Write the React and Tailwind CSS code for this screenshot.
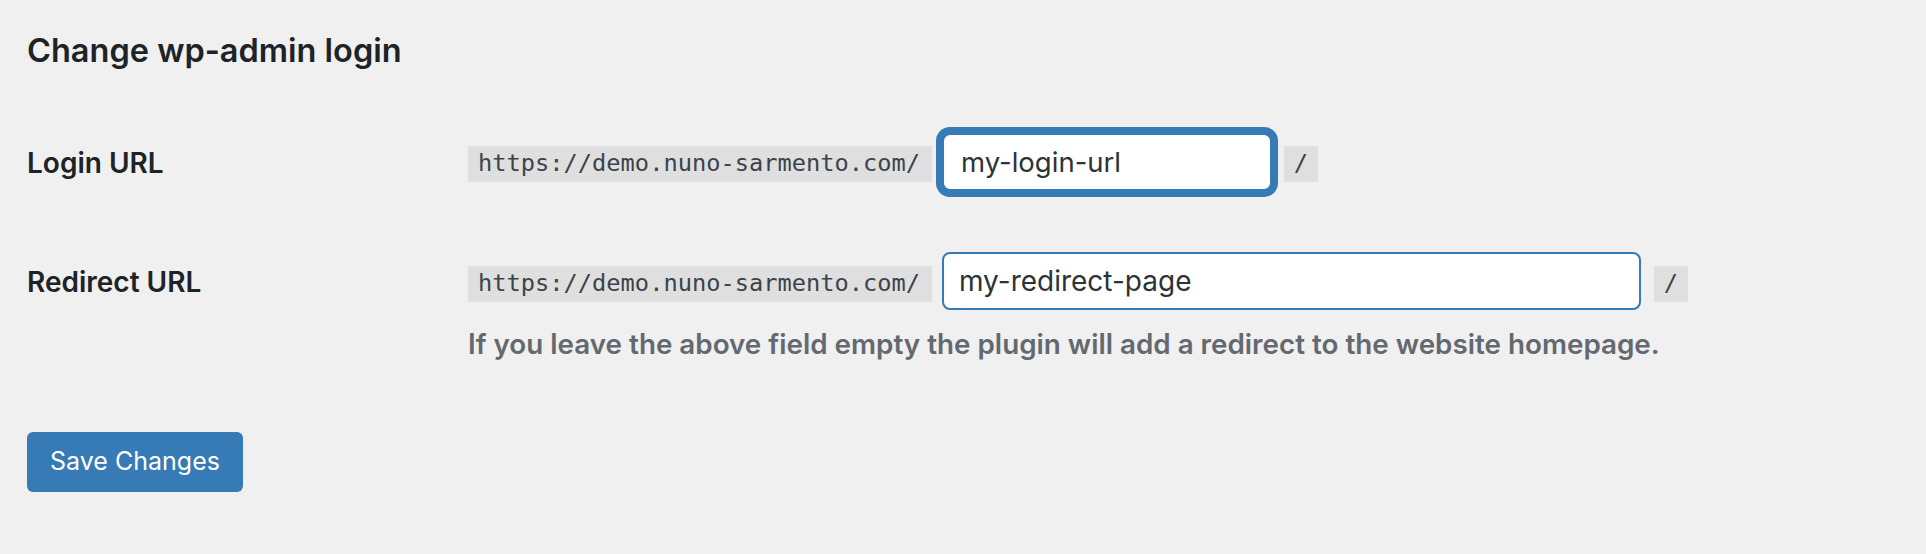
export default function App() {
  return (
    <div className="min-h-screen w-full bg-[#f0f0f1] font-[Inter,sans-serif] text-[#1d2327] pl-[27px] pt-[29px]">
      <h2 className="text-[32.5px] leading-[44px] font-semibold text-[#1d2327]">Change wp-admin login</h2>

      <div className="mt-[60px] flex items-start">
        <div className="w-[441px] shrink-0 mt-[12px] text-[28px] leading-[36px] font-semibold">Login URL</div>
        <div className="flex items-start">
          <code className="mt-[13px] flex h-[36px] w-[464px] items-center bg-[#dfdfe0] px-[10px] font-['DejaVu_Sans_Mono',monospace] text-[23.7px] text-[#3c434a]">https://demo.nuno-sarmento.com/</code>
          <input
            readOnly
            value="my-login-url"
            className="ml-[10px] h-[58px] w-[330px] rounded-[8px] border-2 border-[#367ab6] bg-white pl-[17px] text-[27.5px] text-[#2c3338] outline-none shadow-[0_0_0_6px_#367ab6] font-[Inter,sans-serif]"
          />
          <code className="mt-[13px] ml-[12px] flex h-[36px] w-[34px] items-center justify-center bg-[#dfdfe0] font-['DejaVu_Sans_Mono',monospace] text-[23.7px] text-[#3c434a]">/</code>
        </div>
      </div>

      <div className="mt-[61px] flex items-start">
        <div className="w-[441px] shrink-0 mt-[12px] text-[28px] leading-[36px] font-semibold">Redirect URL</div>
        <div className="flex flex-col">
          <div className="flex items-start">
            <code className="mt-[14px] flex h-[36px] w-[464px] items-center bg-[#dfdfe0] px-[10px] font-['DejaVu_Sans_Mono',monospace] text-[23.7px] text-[#3c434a]">https://demo.nuno-sarmento.com/</code>
            <input
              readOnly
              value="my-redirect-page"
              className="ml-[10px] h-[58px] w-[699px] rounded-[8px] border-2 border-[#367ab6] bg-white pl-[15px] text-[28px] text-[#2c3338] outline-none font-[Inter,sans-serif]"
            />
            <code className="mt-[14px] ml-[13px] flex h-[36px] w-[34px] items-center justify-center bg-[#dfdfe0] font-['DejaVu_Sans_Mono',monospace] text-[23.7px] text-[#3c434a]">/</code>
          </div>
          <p className="mt-[16px] text-[27.8px] leading-[36px] font-semibold text-[#646970]">If you leave the above field empty the plugin will add a redirect to the website homepage.</p>
        </div>
      </div>

      <button className="mt-[70px] flex h-[60px] w-[216px] items-center justify-center rounded-[6px] bg-[#367ab6] text-[25px] text-white">Save Changes</button>
    </div>
  );
}
